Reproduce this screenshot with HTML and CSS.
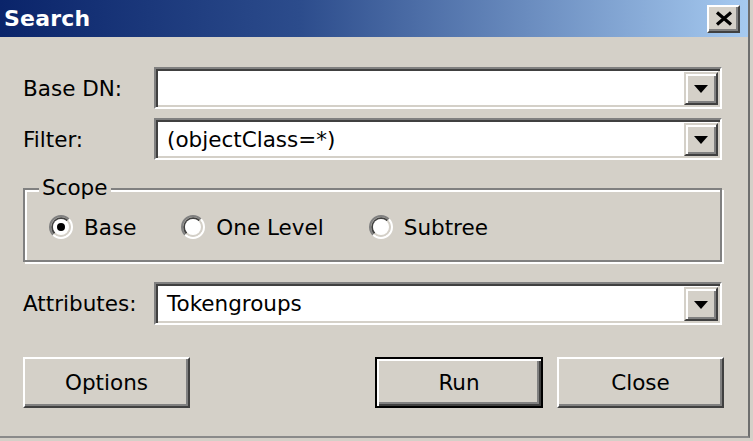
FILE: index.html
```html
<!DOCTYPE html>
<html>
<head>
<meta charset="utf-8">
<link rel="stylesheet" href="styles.css">
</head>
<body>
<div class="window">
  <div class="titlebar">
    <span class="title">Search</span>
    <button class="tb-close" aria-label="Close">
      <svg width="18" height="15" viewBox="0 0 18 15"><path d="M2 1.5 L16 13.5 M16 1.5 L2 13.5" stroke="#000" stroke-width="3.2" fill="none"/></svg>
    </button>
  </div>
  <div class="content">
    <div class="row">
      <span class="lbl">Base DN:</span>
      <div class="combo"><span class="combo-text"></span><span class="drop"><i class="arrow"></i></span></div>
    </div>
    <div class="row row-gap">
      <span class="lbl">Filter:</span>
      <div class="combo"><span class="combo-text">(objectClass=*)</span><span class="drop"><i class="arrow"></i></span></div>
    </div>
    <div class="group">
      <span class="legend">Scope</span>
      <div class="radios">
        <label class="radio">
          <svg width="24" height="24" viewBox="0 0 24 24"><path d="M4.22 19.78 A11 11 0 0 1 19.78 4.22" stroke="#808080" stroke-width="2" fill="none"/><path d="M19.78 4.22 A11 11 0 0 1 4.22 19.78" stroke="#fff" stroke-width="2" fill="none"/><path d="M5.64 18.36 A9 9 0 0 1 18.36 5.64" stroke="#404040" stroke-width="2" fill="none"/><path d="M18.36 5.64 A9 9 0 0 1 5.64 18.36" stroke="#d4d0c8" stroke-width="2" fill="none"/><circle cx="12" cy="12" r="8" fill="#fff"/><circle cx="12" cy="12" r="4" fill="#000"/></svg>
          <span>Base</span>
        </label>
        <label class="radio">
          <svg width="24" height="24" viewBox="0 0 24 24"><path d="M4.22 19.78 A11 11 0 0 1 19.78 4.22" stroke="#808080" stroke-width="2" fill="none"/><path d="M19.78 4.22 A11 11 0 0 1 4.22 19.78" stroke="#fff" stroke-width="2" fill="none"/><path d="M5.64 18.36 A9 9 0 0 1 18.36 5.64" stroke="#404040" stroke-width="2" fill="none"/><path d="M18.36 5.64 A9 9 0 0 1 5.64 18.36" stroke="#d4d0c8" stroke-width="2" fill="none"/><circle cx="12" cy="12" r="8" fill="#fff"/></svg>
          <span>One Level</span>
        </label>
        <label class="radio">
          <svg width="24" height="24" viewBox="0 0 24 24"><path d="M4.22 19.78 A11 11 0 0 1 19.78 4.22" stroke="#808080" stroke-width="2" fill="none"/><path d="M19.78 4.22 A11 11 0 0 1 4.22 19.78" stroke="#fff" stroke-width="2" fill="none"/><path d="M5.64 18.36 A9 9 0 0 1 18.36 5.64" stroke="#404040" stroke-width="2" fill="none"/><path d="M18.36 5.64 A9 9 0 0 1 5.64 18.36" stroke="#d4d0c8" stroke-width="2" fill="none"/><circle cx="12" cy="12" r="8" fill="#fff"/></svg>
          <span>Subtree</span>
        </label>
      </div>
    </div>
    <div class="row row-attr">
      <span class="lbl">Attributes:</span>
      <div class="combo"><span class="combo-text">Tokengroups</span><span class="drop"><i class="arrow"></i></span></div>
    </div>
    <div class="buttons">
      <button class="btn">Options</button>
      <button class="btn btn-default">Run</button>
      <button class="btn">Close</button>
    </div>
  </div>
</div>
</body>
</html>
```
FILE: styles.css
```css
html, body {
  margin: 0;
  padding: 0;
}
body {
  width: 753px;
  height: 441px;
  overflow: hidden;
  background: #d4d0c8;
  font-family: "DejaVu Sans", sans-serif;
  font-size: 21.5px;
  color: #000;
}
.window {
  width: 750px;
  height: 438px;
  box-sizing: border-box;
  border-right: 2px solid #6e6e6e;
  border-bottom: 2px solid #8a8a8a;
  background: #d4d0c8;
}
.titlebar {
  height: 37px;
  display: flex;
  align-items: center;
  padding-left: 4px;
  background: linear-gradient(to right, #0a246a 0%, #2c4c8c 40%, #a6caf0 100%);
}
.title {
  color: #fff;
  font-weight: bold;
  font-size: 22px;
  letter-spacing: 0.2px;
}
.tb-close {
  margin-left: auto;
  margin-right: 8px;
  width: 33px;
  height: 28px;
  padding: 0;
  box-sizing: border-box;
  background: #d4d0c8;
  border: 2px solid;
  border-color: #fff #404040 #404040 #fff;
  box-shadow: inset -2px -2px 0 #808080;
  display: flex;
  align-items: center;
  justify-content: center;
}
.content {
  padding: 30px 0 0 23px;
}
.row {
  display: flex;
  align-items: center;
  height: 42px;
}
.row-gap {
  margin-top: 9px;
}
.row-attr {
  margin-top: 20px;
  height: 43px;
}
.lbl {
  width: 131px;
  flex: none;
}
.combo {
  width: 568px;
  height: 100%;
  box-sizing: border-box;
  display: flex;
  padding: 4px;
  background: #fff;
  border: 2px solid;
  border-color: #808080 #fff #fff #808080;
  box-shadow: inset 2px 2px 0 #404040, inset -2px -2px 0 #d4d0c8;
}
.combo-text {
  flex: 1;
  display: flex;
  align-items: center;
  padding-left: 7px;
}
.drop {
  width: 34px;
  margin: -1px -2px -2px 0;
  box-sizing: border-box;
  background: #d4d0c8;
  border: 2px solid;
  border-color: #d4d0c8 #404040 #404040 #d4d0c8;
  box-shadow: inset 2px 2px 0 #fff, inset -2px -2px 0 #808080;
  display: flex;
  align-items: center;
  justify-content: center;
}
.arrow {
  width: 0;
  height: 0;
  border-top: 8px solid #000;
  border-left: 7.5px solid transparent;
  border-right: 7.5px solid transparent;
  margin-top: 1px;
}
.group {
  position: relative;
  margin-top: 28px;
  width: 699px;
  height: 74px;
  box-sizing: border-box;
  border: 2px solid #808080;
  box-shadow: inset 2px 2px 0 #fff, 2px 2px 0 #fff;
  padding: 25px 0 0 24px;
}
.legend {
  position: absolute;
  top: -15px;
  left: 14px;
  padding: 0 3px;
  background: #d4d0c8;
  line-height: 26px;
}
.radios {
  display: flex;
  gap: 45px;
  align-items: center;
}
.radio {
  display: flex;
  align-items: center;
  gap: 11px;
  height: 24px;
}
.radio svg {
  display: block;
  flex: none;
}
.buttons {
  display: flex;
  margin-top: 32px;
  width: 701px;
}
.btn {
  height: 51px;
  width: 167px;
  box-sizing: border-box;
  font: inherit;
  color: #000;
  background: #d4d0c8;
  border: 2px solid;
  border-color: #fff #404040 #404040 #fff;
  box-shadow: inset -2px -2px 0 #808080;
  padding: 0;
}
.btn-default {
  margin-left: auto;
  margin-right: 14px;
  width: 168px;
  border-color: #000;
  box-shadow: inset 2px 2px 0 #fff, inset -2px -2px 0 #404040, inset -4px -4px 0 #808080;
}
```
